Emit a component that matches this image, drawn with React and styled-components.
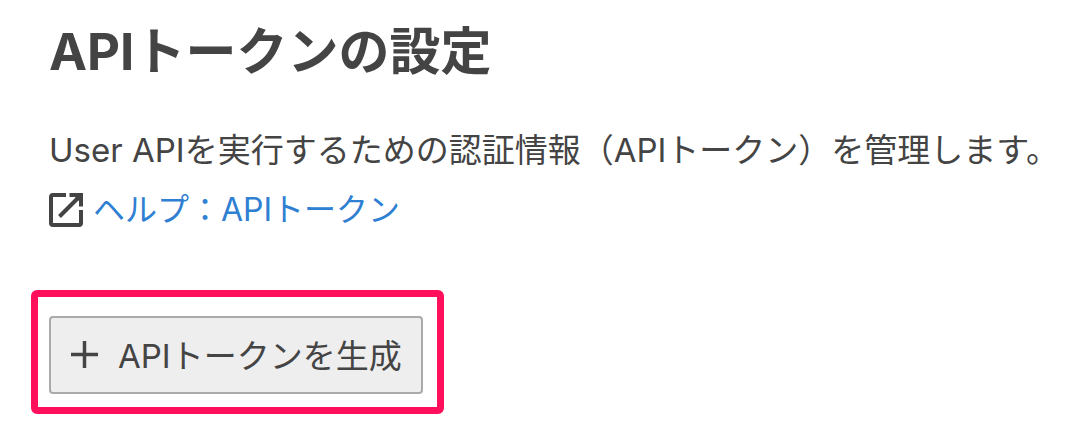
import React from 'react';
import styled, { createGlobalStyle } from 'styled-components';

const GlobalStyle = createGlobalStyle`
  * {
    box-sizing: border-box;
  }
  body {
    margin: 0;
    background: #fff;
    color: #444;
    font-family: Inter, "Noto Sans CJK JP", sans-serif;
    font-size: 33px;
  }
`

const Page = styled.main`
  padding: 16px 0 16px 31px;
`

const Header = styled.header`
  padding-left: 18px;
`

const Title = styled.h1`
  margin: 0;
  font-size: 51px;
  line-height: 72px;
`

const Description = styled.p`
  margin: 32px 0 0;
  line-height: 60px;
`

const HelpLink = styled.a`
  display: flex;
  align-items: center;
  gap: 10px;
  width: fit-content;
  color: #2f7fd2;
  font-size: 32px;
  line-height: 60px;
  text-decoration: none;
`

const Highlight = styled.div`
  width: fit-content;
  margin-top: 50px;
  padding: 19px 14px 13px 11px;
  border: 7px solid #ff0f5c;
  border-radius: 6px;
`

const Button = styled.button`
  display: flex;
  align-items: center;
  gap: 20px;
  height: 78px;
  padding: 0 19px 2px 20px;
  border: 2px solid #aaa;
  border-radius: 4px;
  background: #eee;
  color: #444;
  font: inherit;
`

const OpenIcon = () => (
  <svg width="34" height="34" viewBox="0 0 34 34" fill="none" stroke="#444" strokeWidth="4" aria-hidden="true">
    <path d="M17 2H4Q2 2 2 4V30Q2 32 4 32H30Q32 32 32 30V17M20.500 2H32V13.500M31 3 10.500 23.500" />
    <path d="M24 2H32V10Z" fill="#444" stroke="none" />
  </svg>
)

const PlusIcon = () => (
  <svg width="27" height="27" viewBox="0 0 27 27" stroke="#444" strokeWidth="3.500" aria-hidden="true">
    <path d="M13.500 0v27M0 13.500h27" />
  </svg>
)

export default function App() {
  return (
    <>
      <GlobalStyle />
      <Page>
        <Header>
          <Title>APIトークンの設定</Title>
          <Description>User APIを実行するための認証情報（APIトークン）を管理します。</Description>
          <HelpLink href="#help"><OpenIcon />ヘルプ：APIトークン</HelpLink>
        </Header>
        <Highlight>
          <Button type="button"><PlusIcon />APIトークンを生成</Button>
        </Highlight>
      </Page>
    </>
  )
}
